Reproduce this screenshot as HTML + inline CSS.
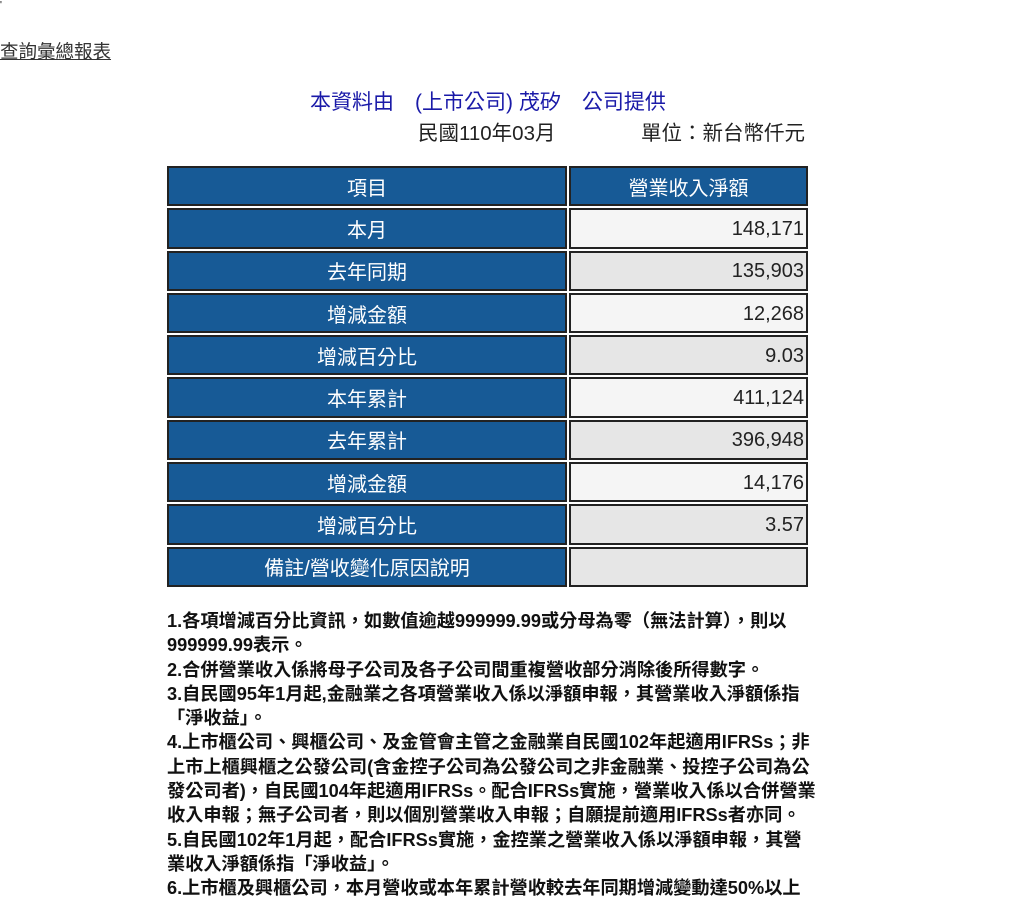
<!DOCTYPE html>
<html><head><meta charset="utf-8"><style>
body{margin:0;background:#fff;font-family:"Liberation Sans","Noto Sans CJK TC",sans-serif;width:1028px;height:899px;overflow:hidden;position:relative}
.a{position:absolute;white-space:nowrap}
a{color:#333;text-decoration:underline}
table{position:absolute;left:167px;top:166px;border-collapse:separate;border-spacing:2px 2px;margin:-2px}
td{height:36.3px;border:2px solid #222;font-size:20px;padding:0;vertical-align:middle}
td.l{width:396px;background:#175a96;color:#fff;text-align:center}
td.r{width:233px;text-align:right;padding-right:2px;color:#222;padding-top:2px;height:34.3px}
.o{background:#f5f5f5}.e{background:#e6e6e6}
.n{left:167px;top:609px;font-size:18.2px;font-weight:bold;line-height:24.3px;color:#111}
</style></head><body>
<div class="a" style="left:0;top:0;font-size:10px">'</div>
<div class="a" style="left:0;top:38px;font-size:18.5px"><a>查詢彙總報表</a></div>
<div class="a" style="left:310px;top:86px;font-size:21px;color:#1a1aa8;white-space:pre">本資料由　(上市公司) 茂矽　公司提供</div>
<div class="a" style="left:418px;top:116px;font-size:20.5px;color:#222">民國110年03月</div>
<div class="a" style="left:641px;top:116px;font-size:20.5px;color:#222">單位：新台幣仟元</div>
<table>
<tr><td class="l">項目</td><td class="l" style="width:235px">營業收入淨額</td></tr>
<tr><td class="l">本月</td><td class="r o">148,171</td></tr>
<tr><td class="l">去年同期</td><td class="r e">135,903</td></tr>
<tr><td class="l">增減金額</td><td class="r o">12,268</td></tr>
<tr><td class="l">增減百分比</td><td class="r e">9.03</td></tr>
<tr><td class="l">本年累計</td><td class="r o">411,124</td></tr>
<tr><td class="l">去年累計</td><td class="r e">396,948</td></tr>
<tr><td class="l">增減金額</td><td class="r o">14,176</td></tr>
<tr><td class="l">增減百分比</td><td class="r e">3.57</td></tr>
<tr><td class="l">備註/營收變化原因說明</td><td class="r e"></td></tr>
</table>
<div class="a n">1.各項增減百分比資訊，如數值逾越999999.99或分母為零（無法計算），則以<br>999999.99表示。<br>2.合併營業收入係將母子公司及各子公司間重複營收部分消除後所得數字。<br>3.自民國95年1月起,金融業之各項營業收入係以淨額申報，其營業收入淨額係指<br>「淨收益」。<br>4.上市櫃公司、興櫃公司、及金管會主管之金融業自民國102年起適用IFRSs；非<br>上市上櫃興櫃之公發公司(含金控子公司為公發公司之非金融業、投控子公司為公<br>發公司者)，自民國104年起適用IFRSs。配合IFRSs實施，營業收入係以合併營業<br>收入申報；無子公司者，則以個別營業收入申報；自願提前適用IFRSs者亦同。<br>5.自民國102年1月起，配合IFRSs實施，金控業之營業收入係以淨額申報，其營<br>業收入淨額係指「淨收益」。<br>6.上市櫃及興櫃公司，本月營收或本年累計營收較去年同期增減變動達50%以上</div>
</body></html>
